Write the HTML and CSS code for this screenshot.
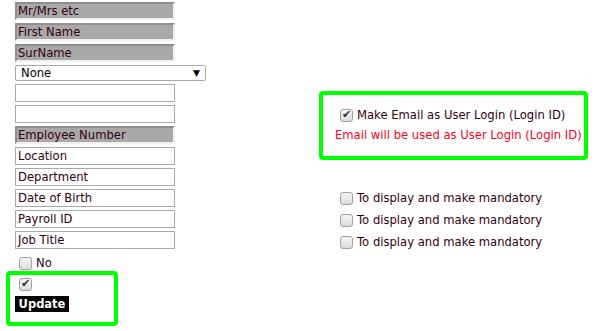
FILE: index.html
```html
<!DOCTYPE html>
<html lang="en">
<head>
    <meta charset="UTF-8">
    <title>Employee Fields</title>
    <link rel="stylesheet" href="styles.css">
</head>
<body>
    <div class="page">
        <div class="left-col">
            <div class="field readonly">Mr/Mrs etc</div>
            <div class="field readonly">First Name</div>
            <div class="field readonly">SurName</div>
            <div class="select-box">
                <span>None</span>
                <span class="arrow">&#9660;</span>
            </div>
            <div class="field"></div>
            <div class="field"></div>
            <div class="field readonly">Employee Number</div>
            <div class="field">Location</div>
            <div class="field">Department</div>
            <div class="field">Date of Birth</div>
            <div class="field">Payroll ID</div>
            <div class="field">Job Title</div>
            <label class="check-row no-row"><span class="cb"></span>No</label>
            <div class="green-box update-box">
                <span class="cb checked"></span>
                <button class="update-btn">Update</button>
            </div>
        </div>
        <div class="right-col">
            <div class="green-box login-box">
                <label class="check-row"><span class="cb checked"></span>Make Email as User Login (Login ID)</label>
                <div class="warn">Email will be used as User Login (Login ID)</div>
            </div>
            <div class="mandatory-list">
                <label class="check-row"><span class="cb"></span>To display and make mandatory</label>
                <label class="check-row"><span class="cb"></span>To display and make mandatory</label>
                <label class="check-row"><span class="cb"></span>To display and make mandatory</label>
            </div>
        </div>
    </div>
</body>
</html>
```

FILE: styles.css
```css
body {
    margin: 0;
    font-family: "DejaVu Sans", Verdana, sans-serif;
    font-size: 11.6px;
    color: #330011;
    background: #fff;
}
.page {
    display: flex;
}
.left-col {
    width: 304px;
    padding: 2px 0 0 15px;
    display: flex;
    flex-direction: column;
    align-items: flex-start;
}
.field {
    box-sizing: border-box;
    width: 160px;
    height: 18px;
    margin-bottom: 3px;
    padding: 0 2px;
    border: 1px solid #a9a9a9;
    line-height: 16px;
    white-space: nowrap;
}
.field.readonly {
    background-color: #a9a9a9;
    border: 2px solid;
    border-color: #8e8e8e #f0f0f0 #f0f0f0 #8e8e8e;
    line-height: 14px;
    padding: 0 1px;
}
.select-box {
    box-sizing: border-box;
    width: 191px;
    height: 16px;
    margin-bottom: 3px;
    padding: 0 5px 0 5px;
    border: 1px solid #a9a9a9;
    border-radius: 2px;
    display: flex;
    justify-content: space-between;
    align-items: center;
    line-height: 14px;
    color: #000;
}
.arrow {
    font-size: 9px;
}
.check-row {
    display: flex;
    align-items: center;
    gap: 4px;
    white-space: nowrap;
}
.cb {
    box-sizing: border-box;
    display: inline-block;
    width: 13px;
    height: 13px;
    border: 1px solid #a0a0a0;
    border-radius: 3px;
    background: linear-gradient(#f4f4f4, #dcdcdc);
    position: relative;
}
.cb.checked::after {
    content: "\2714";
    position: absolute;
    left: 1px;
    top: -2px;
    font-size: 11px;
    color: #333;
}
.no-row {
    margin: 4px 0 0 4px;
}
.green-box {
    border: 4px solid #00ff00;
    border-radius: 4px;
}
.update-box {
    box-sizing: border-box;
    width: 112px;
    height: 55px;
    margin: 1px 0 0 -9px;
    padding: 3px 0 0 5px;
    display: flex;
    flex-direction: column;
    align-items: flex-start;
}
.update-box .cb {
    margin-left: 4px;
}
.update-btn {
    margin-top: 5px;
    width: 54px;
    height: 16px;
    padding: 0;
    border: none;
    background: #000;
    color: #fff;
    font-family: "DejaVu Sans", Verdana, sans-serif;
    font-size: 11.5px;
    font-weight: bold;
    line-height: 16px;
    text-align: center;
}
.right-col {
    padding-top: 91px;
}
.login-box {
    box-sizing: border-box;
    width: 269px;
    height: 69px;
    padding: 13px 0 0 12px;
}
.login-box .check-row {
    margin-left: 5px;
}
.warn {
    color: #ff0022;
    margin-top: 6px;
    white-space: nowrap;
}
.mandatory-list {
    margin: 31px 0 0 21px;
    display: flex;
    flex-direction: column;
    gap: 8px;
}
```
